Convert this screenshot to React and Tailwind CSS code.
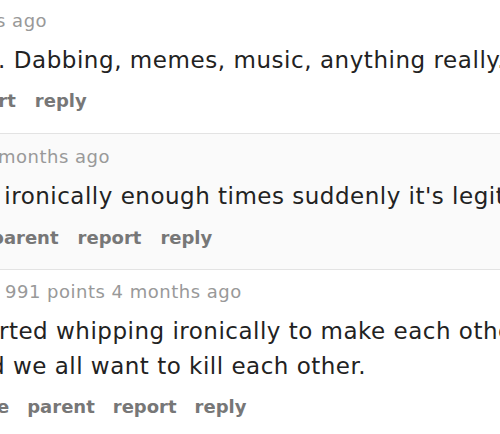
export default function App() {
  const font = { fontFamily: '"DejaVu Sans", Verdana, sans-serif' };
  return (
    <div className="w-[500px] h-[434px] overflow-hidden bg-white" style={font}>
      {/* top comment */}
      <div className="pt-[9px] pb-[20px]">
        <div className="text-[18px] leading-[24px] tracking-[0.5px] text-[#999] whitespace-nowrap ml-[-4px]">s ago</div>
        <div className="mt-[10px] text-[23px] leading-[35px] tracking-[0.55px] text-[#222] whitespace-nowrap ml-[-2px]">. Dabbing, memes, music, anything really.</div>
        <div className="mt-[11px] flex gap-[19px] text-[18px] leading-[24px] font-bold text-[#777] whitespace-nowrap ml-[-48px]">
          <span>report</span>
          <span>reply</span>
        </div>
      </div>
      {/* middle comment */}
      <div className="bg-[#fafafa] border-y border-[#e3e3e3] pt-[11px] pb-[19px]">
        <div className="text-[18px] leading-[24px] tracking-[0.5px] text-[#999] whitespace-nowrap ml-[-2px]">months ago</div>
        <div className="mt-[10px] text-[23px] leading-[35px] tracking-[0.5px] text-[#222] whitespace-nowrap ml-[-13px]">t ironically enough times suddenly it's legit.</div>
        <div className="mt-[12px] flex gap-[19px] text-[18px] leading-[24px] font-bold text-[#777] whitespace-nowrap ml-[-9px]">
          <span>parent</span>
          <span>report</span>
          <span>reply</span>
        </div>
      </div>
      {/* bottom comment */}
      <div className="pt-[10px] pb-[20px]">
        <div className="text-[18px] leading-[24px] tracking-[0.5px] text-[#999] whitespace-nowrap ml-[5px]">991 points 4 months ago</div>
        <div className="mt-[10px] text-[23px] leading-[35px] tracking-[0.5px] text-[#222] whitespace-nowrap">
          <div className="ml-[-1px]">rted whipping ironically to make each other laugh</div>
          <div className="ml-[-10px]">d we all want to kill each other.</div>
        </div>
        <div className="mt-[11px] flex gap-[18px] text-[18px] leading-[24px] font-bold text-[#777] whitespace-nowrap ml-[-3px]">
          <span>e</span>
          <span>parent</span>
          <span>report</span>
          <span>reply</span>
        </div>
      </div>
    </div>
  );
}
